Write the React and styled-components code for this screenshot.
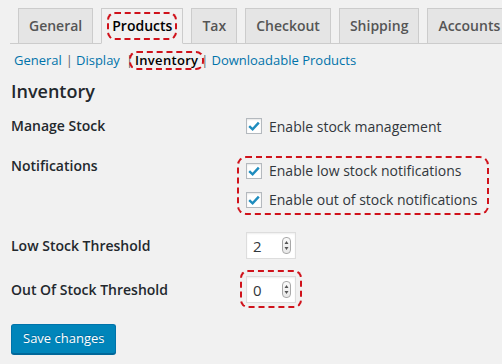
import React from 'react';
import styled, { createGlobalStyle } from 'styled-components';

const tabs = ['General', 'Products', 'Tax', 'Checkout', 'Shipping', 'Accounts'];
const sections = ['General', 'Display', 'Inventory', 'Downloadable Products'];

const GlobalStyle = createGlobalStyle`
  html, body {
    margin: 0;
    padding: 0;
    background: #f1f1f1;
  }
  body {
    font-family: "Open Sans", "Liberation Sans", sans-serif;
    color: #23282d;
  }
`;

const Page = styled.div`
  width: 502px;
  height: 364px;
  overflow: hidden;
  padding-top: 8px;
  box-sizing: border-box;
`;

const TabBar = styled.nav`
  display: flex;
  gap: 8px;
  margin-left: 10px;
  padding-left: 8px;
  border-bottom: 1px solid #ccc;
  white-space: nowrap;
`;

const Tab = styled.div`
  flex-shrink: 0;
  padding: 5px 10px;
  margin-bottom: -1px;
  font-size: 14px;
  line-height: 24px;
  font-weight: 600;
  border: 1px solid #ccc;
  background: ${p => (p.$active ? '#f1f1f1' : '#e5e5e5')};
  border-bottom-color: ${p => (p.$active ? '#f1f1f1' : '#ccc')};
  color: ${p => (p.$active ? '#000' : '#555')};
`;

const Marked = styled.span`
  position: relative;
  display: inline-block;
`;

// red dashed annotation drawn over the content
const Mark = styled.span`
  position: absolute;
  top: ${p => p.$t}px;
  bottom: ${p => p.$b}px;
  left: ${p => p.$l}px;
  right: ${p => p.$r}px;
  border: 2px dashed #d0121b;
  border-radius: ${p => p.$radius || 8}px;
  pointer-events: none;
`;

const SubNav = styled.ul`
  display: flex;
  align-items: center;
  list-style: none;
  margin: 6px 0 0;
  padding: 0 0 0 14px;
  font-size: 13px;
  line-height: 20px;
  white-space: nowrap;
`;

const SubLink = styled.a`
  color: ${p => (p.$current ? '#000' : '#0073aa')};
  font-weight: ${p => (p.$current ? 600 : 400)};
  letter-spacing: ${p => (p.$current ? '0.3px' : 'normal')};
  text-decoration: none;
`;

const Sep = styled.span`
  color: #666;
  padding: 0 ${p => p.$r}px 0 ${p => p.$l}px;
`;

const Heading = styled.h2`
  margin: 9px 0 0 11px;
  font-size: 18px;
  line-height: 24px;
  font-weight: 600;
  color: #23282d;
`;

const Form = styled.div`
  padding-left: 11px;
`;

const Row = styled.div`
  display: grid;
  grid-template-columns: 235px 1fr;
  align-items: ${p => p.$align || 'center'};
  margin-top: ${p => p.$gap}px;
`;

const Label = styled.div`
  font-size: 14px;
  line-height: 20px;
  font-weight: 600;
  color: #23282d;
`;

const Fieldset = styled.div`
  position: relative;
  width: fit-content;
`;

const CheckItem = styled.label`
  display: flex;
  align-items: center;
  gap: 7px;
  height: ${p => p.$h || 20}px;
  font-size: 14px;
  color: #32373c;
  white-space: nowrap;
`;

const Box = styled.span`
  width: 16px;
  height: 16px;
  box-sizing: border-box;
  border: 1px solid #b4b9be;
  background: #fff;
  box-shadow: inset 0 1px 2px rgba(0, 0, 0, 0.1);
  display: flex;
  align-items: center;
  justify-content: center;
`;

const NumberField = styled.div`
  position: relative;
  width: 50px;
  height: 27px;
  box-sizing: border-box;
  border: 1px solid #ddd;
  background: #fff;
  box-shadow: inset 0 1px 2px rgba(0, 0, 0, 0.07);
  display: flex;
  align-items: center;
  justify-content: space-between;
  padding: 0 4px 0 6px;
  font-size: 15px;
  color: #32373c;
`;

const Spinner = styled.span`
  width: 9px;
  height: 17px;
  box-sizing: border-box;
  border: 1px solid #a8a8a8;
  border-radius: 4px;
  background: linear-gradient(#fafafa, #e8e8e8);
  display: flex;
  align-items: center;
  justify-content: center;
`;

const SaveButton = styled.button`
  margin: 21px 0 0 11px;
  height: 30px;
  padding: 0 11px 2px;
  border: 1px solid #0073aa;
  border-bottom-color: #006799;
  border-radius: 3px;
  background: #0085ba;
  box-shadow: 0 1px 0 #006799;
  color: #fff;
  font-family: "Open Sans", "Liberation Sans", sans-serif;
  font-size: 13px;
  text-shadow: 0 -1px 1px #006799;
`;

const Check = () => (
  <svg width="14" height="14" viewBox="0 0 14 14">
    <path d="M2.2 7.2 L5.6 10.4 L11.8 3.6" fill="none" stroke="#1e8cbe" strokeWidth="2.4" />
  </svg>
);

const Arrows = () => (
  <svg width="5" height="11" viewBox="0 0 5 11">
    <path d="M2.5 1 L4.5 4 L0.5 4 Z M2.5 10 L4.5 7 L0.5 7 Z" fill="#555" />
  </svg>
);

const Checkbox = ({ children, h }) => (
  <CheckItem $h={h}>
    <Box><Check /></Box>
    {children}
  </CheckItem>
);

const Number = ({ value }) => (
  <NumberField>
    {value}
    <Spinner><Arrows /></Spinner>
  </NumberField>
);

export default function App() {
  return (
    <Page>
      <GlobalStyle />
      <TabBar>
        {tabs.map(t => (
          <Tab key={t} $active={t === 'Products'}>
            {t === 'Products' ? (
              <Marked>
                {t}
                <Mark $t={-2} $b={-2} $l={-5} $r={-5} />
              </Marked>
            ) : t}
          </Tab>
        ))}
      </TabBar>

      <SubNav>
        <li><SubLink href="#">{sections[0]}</SubLink><Sep $l={4} $r={3}>|</Sep></li>
        <li><SubLink href="#">{sections[1]}</SubLink><Sep $l={6} $r={2}>|</Sep></li>
        <li>
          <Marked>
            <SubLink $current>{sections[2]}</SubLink>
            <Mark $t={1} $b={0} $l={-6} $r={-6} />
          </Marked>
          <Sep $l={3} $r={3}>|</Sep>
        </li>
        <li><SubLink href="#">{sections[3]}</SubLink></li>
      </SubNav>

      <Heading>Inventory</Heading>

      <Form>
        <Row $gap={13}>
          <Label>Manage Stock</Label>
          <Checkbox>Enable stock management</Checkbox>
        </Row>
        <Row $gap={20} $align="start">
          <Label>Notifications</Label>
          <Fieldset>
            <Checkbox h={29}>Enable low stock notifications</Checkbox>
            <Checkbox h={29}>Enable out of stock notifications</Checkbox>
            <Mark $t={0} $b={-1} $l={-9} $r={-12} $radius={9} />
          </Fieldset>
        </Row>
        <Row $gap={18}>
          <Label>Low Stock Threshold</Label>
          <Number value="2" />
        </Row>
        <Row $gap={17}>
          <Label>Out Of Stock Threshold</Label>
          <Fieldset>
            <Number value="0" />
            <Mark $t={-6} $b={-5} $l={-6} $r={-6} $radius={8} />
          </Fieldset>
        </Row>
      </Form>

      <SaveButton>Save changes</SaveButton>
    </Page>
  );
}
